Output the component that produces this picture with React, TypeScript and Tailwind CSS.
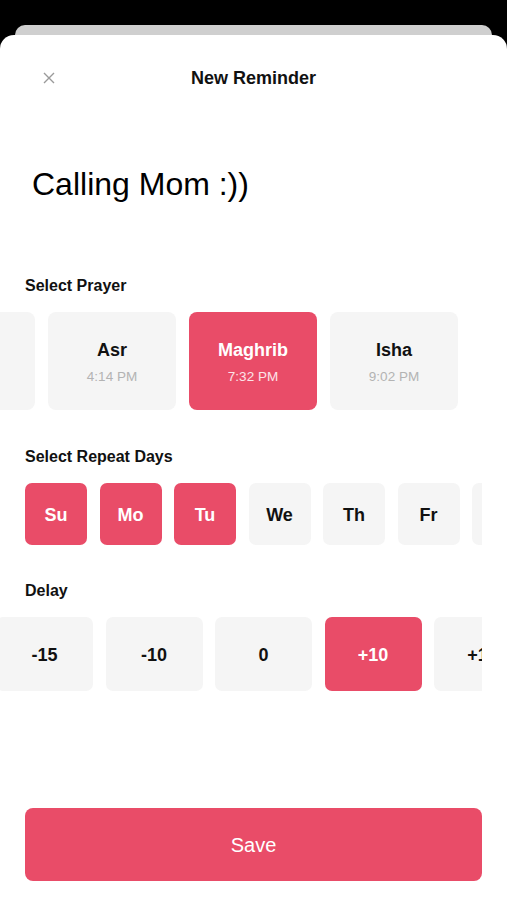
import { useState } from 'react';

const prayers = [
  { name: 'Dhuhr', time: '1:06 PM' },
  { name: 'Asr', time: '4:14 PM' },
  { name: 'Maghrib', time: '7:32 PM' },
  { name: 'Isha', time: '9:02 PM' },
];

const days = ['Su', 'Mo', 'Tu', 'We', 'Th', 'Fr', 'Sa'];
const delays = ['-15', '-10', '0', '+10', '+15'];

const App: React.FC = () => {
  const [prayer, setPrayer] = useState('Maghrib');
  const [selectedDays, setSelectedDays] = useState<string[]>(['Su', 'Mo', 'Tu']);
  const [delay, setDelay] = useState('+10');

  const toggleDay = (d: string) => {
    setSelectedDays((prev) => (prev.includes(d) ? prev.filter((x) => x !== d) : [...prev, d]));
  };

  return (
    <div className="min-h-[900px] bg-black font-['Liberation_Sans',Arial,sans-serif]">
      {/* stacked card behind the sheet */}
      <div className="px-[15px] pt-[25px]">
        <div className="h-[10px] rounded-t-[10px] bg-[#cfcfcf]" />
      </div>

      <div className="min-h-[865px] rounded-t-[14px] bg-white pt-[32px]">
        <div className="grid h-[22px] grid-cols-[1fr_auto_1fr] items-center">
          <button className="ml-[43px] flex h-[12px] w-[12px] items-center justify-center text-[#9a9a9a]">
            <svg width="12" height="12" viewBox="0 0 12 12" fill="none" stroke="currentColor" strokeWidth="1.4">
              <path d="M1 1 L11 11 M11 1 L1 11" />
            </svg>
          </button>
          <h1 className="text-[18px] font-bold leading-[22px] text-[#111]">New Reminder</h1>
          <div />
        </div>

        <div className="mt-[76px] pl-[32px] text-[32px] leading-[38px] text-black">Calling Mom :))</div>

        <h2 className="mt-[74px] pl-[25px] text-[16px] font-bold leading-[18px] text-[#111]">Select Prayer</h2>
        <div className="mt-[17px] overflow-hidden">
          <div className="ml-[-93px] flex gap-[13px]">
            {prayers.map((p) => {
              const active = p.name === prayer;
              return (
                <button
                  key={p.name}
                  onClick={() => setPrayer(p.name)}
                  className={`flex h-[98px] w-[128px] shrink-0 flex-col items-center justify-center rounded-[8px] pt-[2px] ${
                    active ? 'bg-[#e94c68]' : 'bg-[#f5f5f5]'
                  }`}
                >
                  <span className={`text-[18px] font-bold leading-[22px] ${active ? 'text-white' : 'text-[#111]'}`}>
                    {p.name}
                  </span>
                  <span className={`mt-[8px] text-[13.5px] leading-[16px] ${active ? 'text-white/85' : 'text-[#b3b3b3]'}`}>
                    {p.time}
                  </span>
                </button>
              );
            })}
          </div>
        </div>

        <h2 className="mt-[38px] pl-[25px] text-[16px] font-bold leading-[18px] text-[#111]">Select Repeat Days</h2>
        <div className="mx-[25px] mt-[17px] overflow-hidden">
          <div className="flex gap-[12.5px]">
            {days.map((d) => {
              const active = selectedDays.includes(d);
              return (
                <button
                  key={d}
                  onClick={() => toggleDay(d)}
                  className={`flex h-[62px] w-[62px] shrink-0 items-center justify-center rounded-[7px] pt-[3px] text-[18px] font-bold ${
                    active ? 'bg-[#e94c68] text-white' : 'bg-[#f5f5f5] text-[#111]'
                  }`}
                >
                  {d}
                </button>
              );
            })}
          </div>
        </div>

        <h2 className="mt-[37px] pl-[25px] text-[16px] font-bold leading-[18px] text-[#111]">Delay</h2>
        <div className="mr-[25px] mt-[17px] overflow-hidden">
          <div className="ml-[-4px] flex gap-[12.5px]">
            {delays.map((v) => {
              const active = v === delay;
              return (
                <button
                  key={v}
                  onClick={() => setDelay(v)}
                  className={`flex h-[74px] w-[97px] shrink-0 items-center justify-center rounded-[7px] pt-[3px] text-[18px] font-bold ${
                    active ? 'bg-[#e94c68] text-white' : 'bg-[#f5f5f5] text-[#111]'
                  }`}
                >
                  {v}
                </button>
              );
            })}
          </div>
        </div>

        <div className="mt-[117px] px-[25px]">
          <button className="flex h-[73px] w-full items-center justify-center rounded-[8px] bg-[#e94c68] text-[20px] text-white">
            Save
          </button>
        </div>
      </div>
    </div>
  );
};

export default App;
